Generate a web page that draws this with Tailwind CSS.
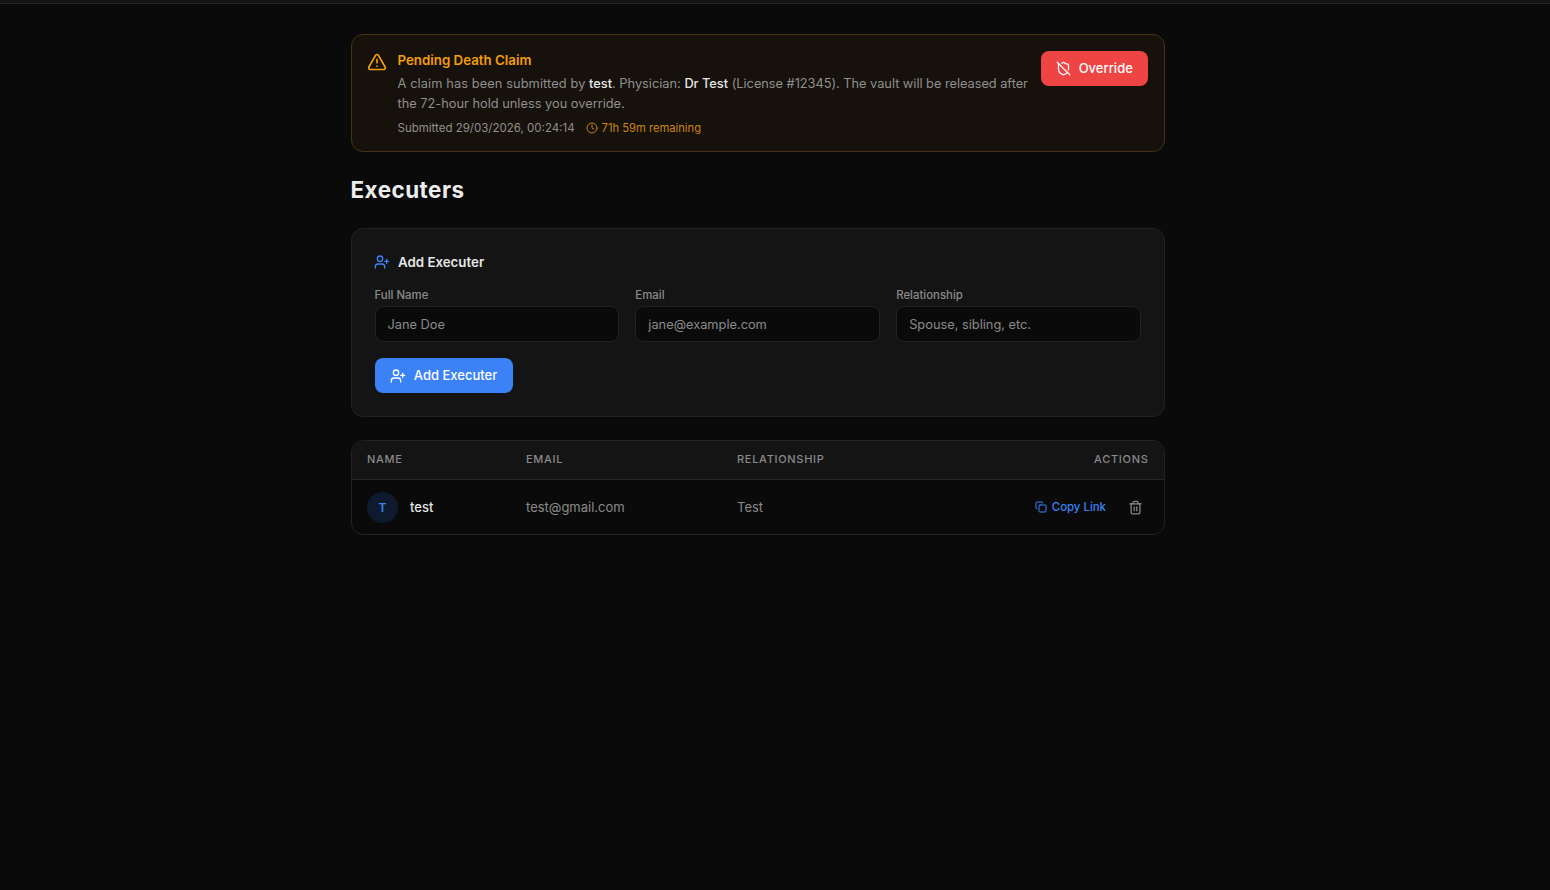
<!DOCTYPE html>
<html lang="en">
<head>
  <meta charset="UTF-8">
  <title>Executers</title>
  <script src="https://cdn.jsdelivr.net/npm/@tailwindcss/browser@4"></script>
</head>
<body class="h-[890px] overflow-hidden bg-[#0a0a0a] font-['Inter',sans-serif] text-[#e5e5e5]">
  <div class="h-[4px] border-b border-[#262626] bg-[#141414]"></div>

  <main class="ml-[350.5px] w-[814.5px] pt-[30px]">
    <!-- Pending claim -->
    <section class="flex h-[118px] items-start rounded-xl border border-[#453210] bg-[#16110b] pl-[15px] pr-4 pt-[15px]">
      <svg class="mt-[2px] h-5 w-5 shrink-0 text-[#f59e0b]" viewBox="0 0 24 24" fill="none" stroke="currentColor" stroke-width="2" stroke-linecap="round" stroke-linejoin="round"><path d="m21.73 18-8-14a2 2 0 0 0-3.48 0l-8 14A2 2 0 0 0 4 21h16a2 2 0 0 0 1.73-3"/><path d="M12 9v4"/><path d="M12 17h.01"/></svg>
      <div class="ml-[11px] w-[636px] shrink-0">
        <h3 class="text-[13.3px] leading-[20px] font-semibold text-[#f59e0b]">Pending Death Claim</h3>
        <p class="mt-[4px] text-[12.8px] leading-[19.5px] whitespace-nowrap text-[#8f8f8f]"><span class="tracking-[0.1px]">A claim has been submitted by</span> <span class="font-medium text-[#e5e5e5]">test</span>. Physician: <span class="font-medium text-[#e5e5e5]">Dr Test</span> <span class="tracking-[-0.03px]">(License #12345). The vault will be released after</span><br>the 72-hour hold unless you override.</p>
        <div class="mt-[7px] flex items-center gap-[11px] text-[11.5px] leading-[16px]">
          <span class="text-[#8f8f8f]">Submitted 29/03/2026, 00:24:14</span>
          <span class="flex items-center gap-1 text-[11.2px] text-[#c98412]">
            <svg class="h-3 w-3" viewBox="0 0 24 24" fill="none" stroke="currentColor" stroke-width="2" stroke-linecap="round" stroke-linejoin="round"><circle cx="12" cy="12" r="10"/><path d="M12 6v6l4 2"/></svg>
            71h 59m remaining
          </span>
        </div>
      </div>
      <button class="mt-[1px] ml-auto flex h-[34.5px] w-[107.5px] items-center justify-center gap-2 rounded-lg bg-[#ef4444] text-[13px] font-medium text-white">
        <svg class="h-[15px] w-[15px]" viewBox="0 0 24 24" fill="none" stroke="currentColor" stroke-width="2" stroke-linecap="round" stroke-linejoin="round"><path d="m2 2 20 20"/><path d="M5 5a1 1 0 0 0-1 1v7c0 5 3.5 7.5 7.67 8.94a1 1 0 0 0 .67.01c2.35-.82 4.48-1.97 5.9-3.71"/><path d="M9.309 3.652A12.252 12.252 0 0 0 11.24 2.28a1.17 1.17 0 0 1 1.52 0C14.51 3.81 17 5 19 5a1 1 0 0 1 1 1v7a9.784 9.784 0 0 1-.08 1.264"/></svg>
        Override
      </button>
    </section>

    <h1 class="mt-[20.5px] text-[22.4px] leading-[33px] font-bold tracking-[0.5px] text-[#ededed]">Executers</h1>

    <!-- Add form -->
    <section class="mt-[22.5px] h-[189px] rounded-xl border border-[#222222] bg-[#141414] px-[23px] pt-[23px]">
      <div class="-ml-[.5px] flex items-center gap-2">
        <svg class="h-4 w-4 text-[#3b82f6]" viewBox="0 0 24 24" fill="none" stroke="currentColor" stroke-width="2" stroke-linecap="round" stroke-linejoin="round"><path d="M16 21v-2a4 4 0 0 0-4-4H6a4 4 0 0 0-4 4v2"/><circle cx="9" cy="7" r="4"/><path d="M19 8v6"/><path d="M22 11h-6"/></svg>
        <h2 class="text-[13.3px] leading-[20px] font-semibold text-[#e5e5e5]">Add Executer</h2>
      </div>
      <div class="mt-[15px] grid grid-cols-3 gap-4">
        <label class="block">
          <span class="block text-[11.4px] leading-[16px] font-medium text-[#8a8a8a]">Full Name</span>
          <input class="mt-[2.5px] h-[36px] w-full rounded-lg border border-[#222222] bg-[#0a0a0a] px-3 pt-[2px] text-[12.8px] placeholder:text-[#8a8a8a]" placeholder="Jane Doe">
        </label>
        <label class="block">
          <span class="block text-[11.4px] leading-[16px] font-medium text-[#8a8a8a]">Email</span>
          <input class="mt-[2.5px] h-[36px] w-full rounded-lg border border-[#222222] bg-[#0a0a0a] px-3 pt-[2px] text-[12.8px] placeholder:text-[#8a8a8a]" placeholder="jane@example.com">
        </label>
        <label class="block">
          <span class="block text-[11.4px] leading-[16px] font-medium text-[#8a8a8a]">Relationship</span>
          <input class="mt-[2.5px] h-[36px] w-full rounded-lg border border-[#222222] bg-[#0a0a0a] px-3 pt-[2px] text-[12.8px] placeholder:text-[#8a8a8a]" placeholder="Spouse, sibling, etc.">
        </label>
      </div>
      <button class="mt-4 flex h-[35px] w-[138px] items-center justify-center gap-2 rounded-lg bg-[#3b82f6] pt-[1px] text-[13px] font-medium text-white">
        <svg class="h-4 w-4" viewBox="0 0 24 24" fill="none" stroke="currentColor" stroke-width="2" stroke-linecap="round" stroke-linejoin="round"><path d="M16 21v-2a4 4 0 0 0-4-4H6a4 4 0 0 0-4 4v2"/><circle cx="9" cy="7" r="4"/><path d="M19 8v6"/><path d="M22 11h-6"/></svg>
        Add Executer
      </button>
    </section>

    <!-- Executers table -->
    <section class="mt-[22.5px] overflow-hidden rounded-xl border border-[#222222]">
      <div class="grid h-[39px] grid-cols-[159px_211px_1fr_auto] items-center border-b border-[#262626] bg-[#141414] pl-[15.5px] pr-[15.5px] text-[11px] font-medium tracking-[0.7px] text-[#8a8a8a]">
        <span>NAME</span>
        <span>EMAIL</span>
        <span>RELATIONSHIP</span>
        <span>ACTIONS</span>
      </div>
      <div class="grid h-[54px] grid-cols-[159px_211px_1fr_auto] items-center pl-[15.5px] pr-[15px] pt-[2px] text-[13px]">
        <div class="flex items-center gap-3">
          <span class="flex h-[31px] w-[31px] items-center justify-center rounded-full bg-[#0f1a2e] text-[12px] font-semibold text-[#3b82f6]">T</span>
          <span class="font-medium text-[#e5e5e5]">test</span>
        </div>
        <span class="text-[#8a8a8a]">test@gmail.com</span>
        <span class="text-[#8a8a8a]">Test</span>
        <div class="flex items-center">
          <a class="flex items-center gap-[5px] text-[11.4px] font-medium text-[#3b82f6]">
            <svg class="h-3 w-3" viewBox="0 0 24 24" fill="none" stroke="currentColor" stroke-width="2" stroke-linecap="round" stroke-linejoin="round"><rect width="14" height="14" x="8" y="8" rx="2" ry="2"/><path d="M4 16c-1.1 0-2-.9-2-2V4c0-1.1.9-2 2-2h10c1.1 0 2 .9 2 2"/></svg>
            Copy Link
          </a>
          <svg class="ml-[22px] mr-[6px] h-[15px] w-[15px] text-[#8a8a8a]" viewBox="0 0 24 24" fill="none" stroke="currentColor" stroke-width="2" stroke-linecap="round" stroke-linejoin="round"><path d="M10 11v6"/><path d="M14 11v6"/><path d="M19 6v14a2 2 0 0 1-2 2H7a2 2 0 0 1-2-2V6"/><path d="M3 6h18"/><path d="M8 6V4a2 2 0 0 1 2-2h4a2 2 0 0 1 2 2v2"/></svg>
        </div>
      </div>
    </section>
  </main>
</body>
</html>
